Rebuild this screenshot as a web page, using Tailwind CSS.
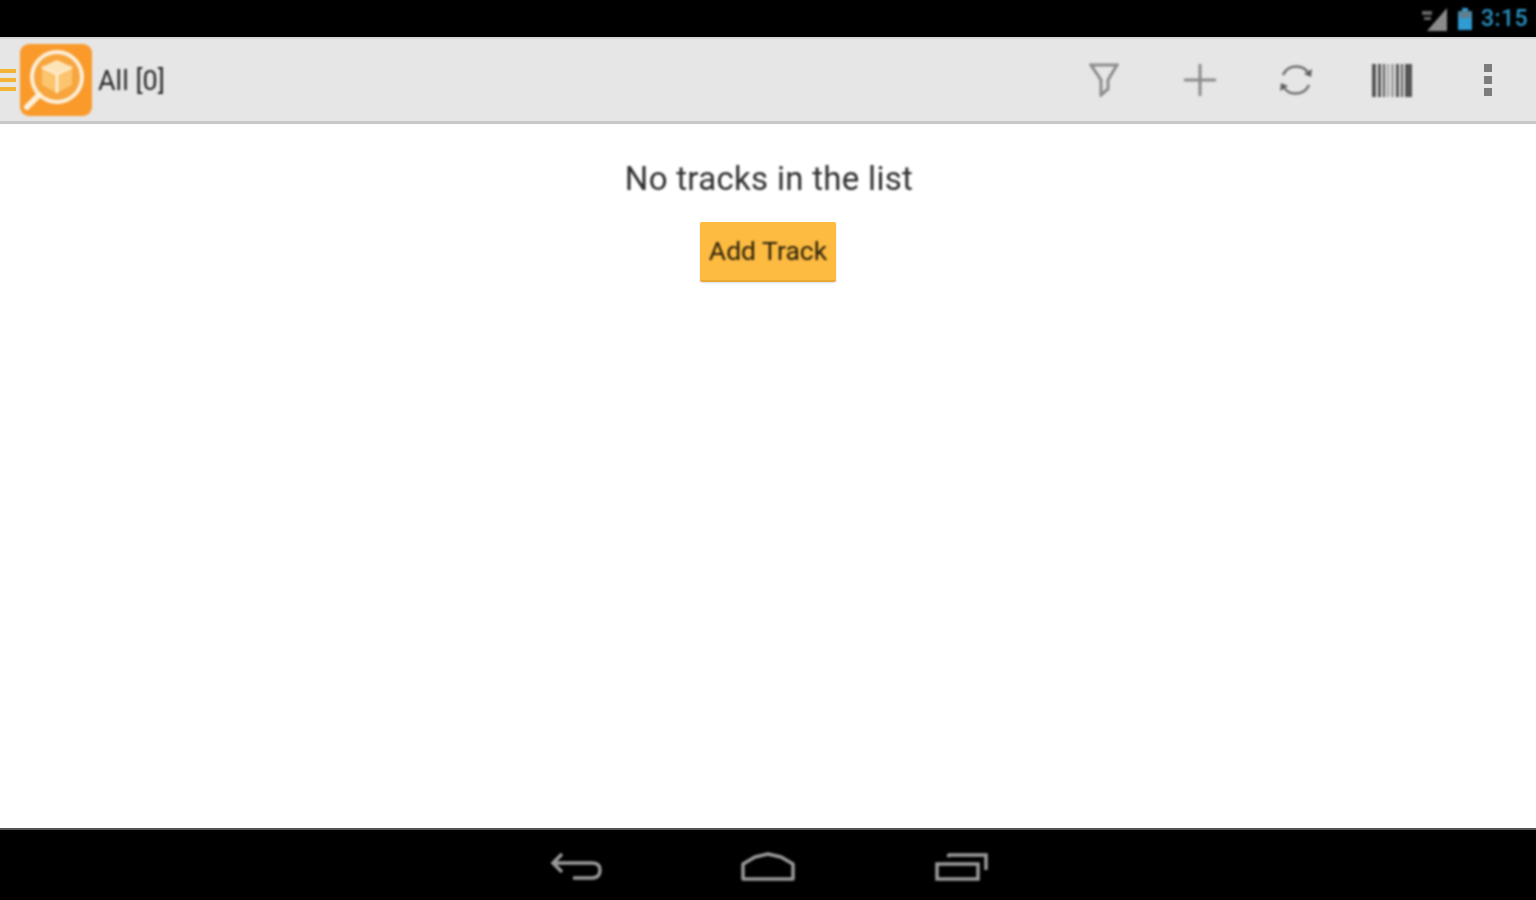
<!DOCTYPE html>
<html>
<head>
  <meta charset="UTF-8" />
  <meta name="viewport" content="width=device-width, initial-scale=1.0" />
  <script src="https://cdn.jsdelivr.net/npm/@tailwindcss/browser@4"></script>
</head>
<body class="bg-white">
<div class="w-[1536px] h-[900px] flex flex-col overflow-hidden font-['Roboto',sans-serif]">
  <!-- status bar -->
  <div class="h-[37px] bg-black flex items-center justify-end pr-[8px] gap-[8px]">
    <svg class="[filter:blur(0.9px)]" width="28" height="26" viewBox="0 0 28 26">
      <path d="M26 2V25H6Z" fill="#8a8a8a" />
      <path d="M1 5h10v4H1zM3 11h7v3H3z" fill="#666666" />
    </svg>
    <svg class="[filter:blur(0.9px)]" width="16" height="24" viewBox="0 0 16 24">
      <path d="M5 1h6v3h3a1 1 0 0 1 1 1v18H1V5a1 1 0 0 1 1-1h3Z" fill="#2f9bd0" />
      <path d="M2 4h12v7H2Z" fill="#5f7f90" />
    </svg>
    <span class="[filter:blur(0.9px)] text-[23px] leading-none font-medium text-[#2b93c4] tracking-[0.4px]">3:15</span>
  </div>

  <!-- action bar -->
  <div class="h-[87px] bg-[#e6e6e6] border-t-[2px] border-t-[#d4d4d4] border-b-[3px] border-b-[#c8c8c8] flex items-center">
    <div class="w-[16px] h-[22px] flex flex-col justify-between [filter:blur(0.6px)]">
      <div class="h-[4px] bg-[#f5b335]"></div>
      <div class="h-[4px] bg-[#f5b335]"></div>
      <div class="h-[4px] bg-[#f5b335]"></div>
    </div>
    <svg class="ml-[4px] [filter:blur(0.9px)]" width="72" height="72" viewBox="0 0 72 72">
      <rect width="72" height="72" rx="9" fill="#f99a2a" />
      <circle cx="37" cy="33" r="25" fill="#f7a53c" stroke="#fdf0dc" stroke-width="4" />
      <path d="M19 51 7 63" stroke="#fdf0dc" stroke-width="6" stroke-linecap="round" />
      <path d="M37 16 52 23V41L37 49 22 41V23Z" fill="#fbc46e" />
      <path d="M22 23 37 30 52 23M37 30V49" fill="none" stroke="#fff3df" stroke-width="2.5" />
      <path d="M37 16 52 23 37 30 22 23Z" fill="#fde3b8" />
    </svg>
    <span class="ml-[6px] mt-[3px] [filter:blur(0.9px)] text-[27px] leading-none text-[#262626]">All [0]</span>

    <div class="ml-auto flex items-center">
      <div class="w-[96px] h-[84px] flex items-center justify-center">
        <svg class="[filter:blur(0.9px)]" width="30" height="34" viewBox="0 0 30 34" fill="none" stroke="#8c8c8c" stroke-width="3">
          <path d="M2 2H28L19 17V26L12 32V17Z" />
        </svg>
      </div>
      <div class="w-[96px] h-[84px] flex items-center justify-center">
        <svg class="[filter:blur(0.9px)]" width="34" height="34" viewBox="0 0 34 34" fill="none" stroke="#8c8c8c" stroke-width="3">
          <path d="M17 1V33M1 17H33" />
        </svg>
      </div>
      <div class="w-[96px] h-[84px] flex items-center justify-center">
        <svg class="[filter:blur(0.9px)]" width="36" height="34" viewBox="0 0 36 34" fill="none" stroke="#707070" stroke-width="2.5">
          <path d="M5 12A14.5 14.5 0 0 1 31 11" />
          <path d="M31 22A14.5 14.5 0 0 1 5 23" />
          <path d="M34 6 33 14 26 11Z" fill="#606060" stroke="none" />
          <path d="M2 28 3 20 10 23Z" fill="#606060" stroke="none" />
        </svg>
      </div>
      <div class="w-[96px] h-[84px] flex items-center justify-center">
        <svg class="[filter:blur(0.9px)]" width="40" height="33" viewBox="0 0 40 33" fill="#555555">
          <path d="M0 0h4v33H0zM6 0h3v33H6zM11 0h2v33h-2z" />
          <path d="M15 0h2v33h-2zM19 0h3v33h-3z" fill="#a0a0a0" />
          <path d="M24 0h3v33h-3zM29 0h2v33h-2zM33 0h7v33h-7z" />
        </svg>
      </div>
      <div class="w-[96px] h-[84px] flex flex-col items-center justify-center gap-[4px] [filter:blur(0.7px)]">
        <div class="w-[8px] h-[8px] bg-[#7c7c7c]"></div>
        <div class="w-[8px] h-[8px] bg-[#7c7c7c]"></div>
        <div class="w-[8px] h-[8px] bg-[#7c7c7c]"></div>
      </div>
    </div>
  </div>

  <!-- empty list -->
  <div class="flex-1 bg-white flex flex-col items-center pt-[36px]">
    <p class="[filter:blur(0.9px)] text-[33px] leading-[38px] text-[#2e2e2e] tracking-[0.3px] ml-[2px]">No tracks in the list</p>
    <div class="mt-[24px] w-[136px] h-[60px] pt-[1px] flex items-center justify-center bg-[#fdbb42] rounded-[2px] border-b-[2px] border-b-[#eaa935] shadow-[0_1px_2px_rgba(0,0,0,0.15)] text-[26.5px] leading-none text-[#2a2008]">
      <span class="[filter:blur(0.9px)]">Add Track</span>
    </div>
  </div>

  <!-- nav bar -->
  <div class="h-[72px] bg-black border-t-[2px] border-t-[#555555] flex items-center justify-center">
    <svg class="ml-[3px] mt-[4px] [filter:blur(0.9px)]" width="52" height="30" viewBox="0 0 52 30" fill="none" stroke="#9a9a9a" stroke-width="3.5">
      <path d="M12 2 3 11 12 20" />
      <path d="M3 11H42Q50 11 50 18 50 26 42 26H23" />
    </svg>
    <svg class="ml-[139px] mt-[4px] [filter:blur(0.9px)]" width="54" height="30" viewBox="0 0 54 30" fill="none" stroke="#9a9a9a" stroke-width="3.5">
      <path d="M2 27V12L14 5 27 2 40 5 52 12V27Z" stroke-linejoin="round" />
    </svg>
    <svg class="ml-[140px] mt-[4px] [filter:blur(0.9px)]" width="54" height="30" viewBox="0 0 54 30" fill="none" stroke="#9a9a9a" stroke-width="3.5">
      <rect x="2" y="12" width="41" height="15" />
      <path d="M13 5 14 3H51V18" />
    </svg>
  </div>
</div>
</body>
</html>
